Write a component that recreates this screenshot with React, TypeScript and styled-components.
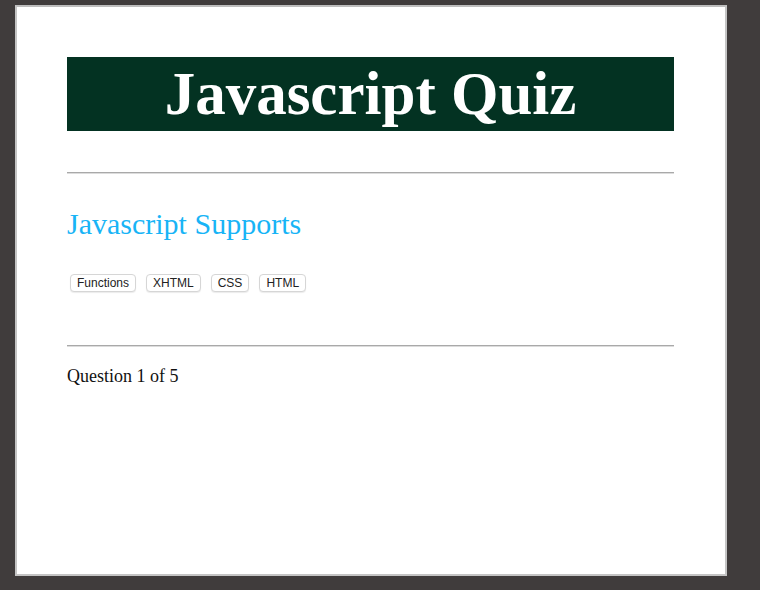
import React from "react";
import styled, { createGlobalStyle } from "styled-components";

const Global = createGlobalStyle`
  html, body { margin: 0; padding: 0; background: #403c3c; }
  body { width: 760px; height: 590px; overflow: hidden; }
`;

const Stage = styled.div`
  padding: 5px 33px 0 15px;
`;

const Panel = styled.main`
  box-sizing: border-box;
  width: 712px;
  height: 571px;
  background: #ffffff;
  border: 2px solid #c4c4c4;
  border-top-color: #bdbdbd;
  padding: 50px 51px 0 50px;
  font-family: "Liberation Serif", "Times New Roman", serif;
`;

const Banner = styled.h1`
  margin: 0;
  height: 74px;
  background: #033222;
  color: #ffffff;
  font-size: 61px;
  font-weight: bold;
  line-height: 74px;
  text-align: center;
`;

const Rule = styled.hr<{ $top: number }>`
  margin: ${(p) => p.$top}px 0 0 0;
  border: 0;
  border-top: 1px solid #a9a9a9;
  border-bottom: 1px solid #dcdcdc;
  height: 0;
`;

const Question = styled.h2`
  margin: 30px 0 0 0;
  color: #18b4f6;
  font-size: 30px;
  font-weight: normal;
  line-height: 40px;
`;

const Options = styled.div`
  display: flex;
  gap: 10px;
  margin: 30px 0 0 3px;
`;

const Option = styled.button`
  height: 18px;
  padding: 0 6px;
  background: #ffffff;
  border: 1px solid #d6d6d6;
  border-radius: 4px;
  box-shadow: 0 1px 1px rgba(0, 0, 0, 0.08);
  font-family: "Liberation Sans", Arial, sans-serif;
  font-size: 12px;
  color: #222;
  line-height: 16px;
  cursor: pointer;
`;

const Progress = styled.p`
  margin: 17px 0 0 0;
  font-size: 18px;
  line-height: 24px;
  color: #111;
`;

export default function App() {
  const answers = ["Functions", "XHTML", "CSS", "HTML"];
  return (
    <>
      <Global />
      <Stage>
        <Panel>
          <Banner>Javascript Quiz</Banner>
          <Rule $top={41} />
          <Question>Javascript Supports</Question>
          <Options>
            {answers.map((a) => (
              <Option key={a}>{a}</Option>
            ))}
          </Options>
          <Rule $top={53} />
          <Progress>Question 1 of 5</Progress>
        </Panel>
      </Stage>
    </>
  );
}
